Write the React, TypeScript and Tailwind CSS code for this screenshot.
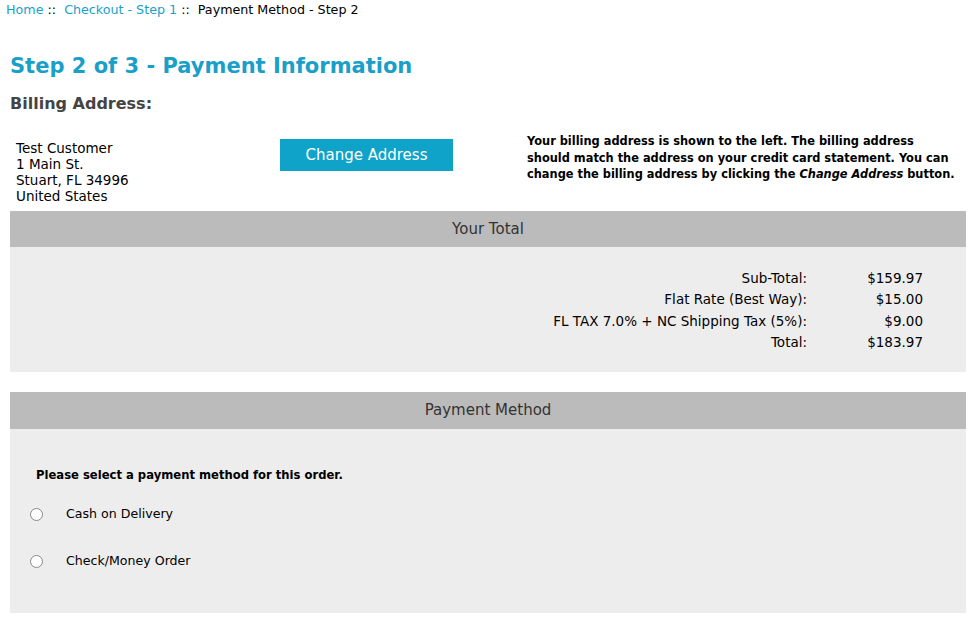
import React from "react";

const font = { fontFamily: '"DejaVu Sans", Verdana, sans-serif' };

export default function App() {
  const rows: [string, string][] = [
    ["Sub-Total:", "$159.97"],
    ["Flat Rate (Best Way):", "$15.00"],
    ["FL TAX 7.0% + NC Shipping Tax (5%):", "$9.00"],
    ["Total:", "$183.97"],
  ];
  return (
    <div className="w-[978px] h-[633px] bg-white text-black" style={font}>
      <div className="pl-[6px] pt-[1px] text-[12.7px] leading-[18px]">
        <span className="text-[#1a9fc9]">Home</span>
        <span> ::&nbsp; </span>
        <span className="text-[#1a9fc9]">Checkout - Step 1</span>
        <span> ::&nbsp; </span>
        <span>Payment Method - Step 2</span>
      </div>
      <div className="px-[10px]">
        <h1 className="mt-[34px] text-[21px] leading-[26px] font-bold text-[#1a9fc9]">
          Step 2 of 3 - Payment Information
        </h1>
        <h2 className="mt-[15px] text-[16px] leading-[20px] font-bold text-[#444444]">
          Billing Address:
        </h2>
        <div className="flex mt-[23px] h-[74px]">
          <div className="w-[270px] pl-[6px] pt-[3px] text-[13.5px] leading-[16px]">
            <div>Test Customer</div>
            <div>1 Main St.</div>
            <div>Stuart, FL 34996</div>
            <div>United States</div>
          </div>
          <div className="w-[247px] pt-[2px]">
            <div className="w-[173px] h-[32px] pt-[1px] bg-[#0fa3c9] text-white text-[15px] flex items-center justify-center">
              Change Address
            </div>
          </div>
          <div className="w-[430px] -mt-[4px] text-[11.4px] leading-[16.6px] font-bold">
            Your billing address is shown to the left. The billing address should match the address on your credit card statement. You can change the billing address by clicking the <i>Change Address</i> button.
          </div>
        </div>
        <div className="w-[956px]">
          <div className="h-[36px] bg-[#bbbbbb] flex items-center justify-center text-[15px] text-[#333333]">
            Your Total
          </div>
          <div className="h-[125px] bg-[#ededed] pt-[21px] text-[13.5px] leading-[21.3px]">
            {rows.map(([l, v]) => (
              <div key={l} className="flex">
                <div className="w-[797px] text-right">{l}</div>
                <div className="w-[116px] text-right">{v}</div>
              </div>
            ))}
          </div>
        </div>
        <div className="w-[956px] mt-[20px]">
          <div className="h-[37px] bg-[#bbbbbb] flex items-center justify-center text-[15px] text-[#333333]">
            Payment Method
          </div>
          <div className="h-[184px] bg-[#ededed] pt-[38px] text-[12.6px]">
            <div className="pl-[26px] font-bold text-[11.6px] leading-[16px]">
              Please select a payment method for this order.
            </div>
            <div className="mt-[23px] flex items-center h-[16px]">
              <span className="ml-[20px] w-[13px] h-[13px] rounded-full border border-[#888888] bg-white"></span>
              <span className="ml-[23px]">Cash on Delivery</span>
            </div>
            <div className="mt-[31px] flex items-center h-[16px]">
              <span className="ml-[20px] w-[13px] h-[13px] rounded-full border border-[#888888] bg-white"></span>
              <span className="ml-[23px]">Check/Money Order</span>
            </div>
          </div>
        </div>
      </div>
    </div>
  );
}
